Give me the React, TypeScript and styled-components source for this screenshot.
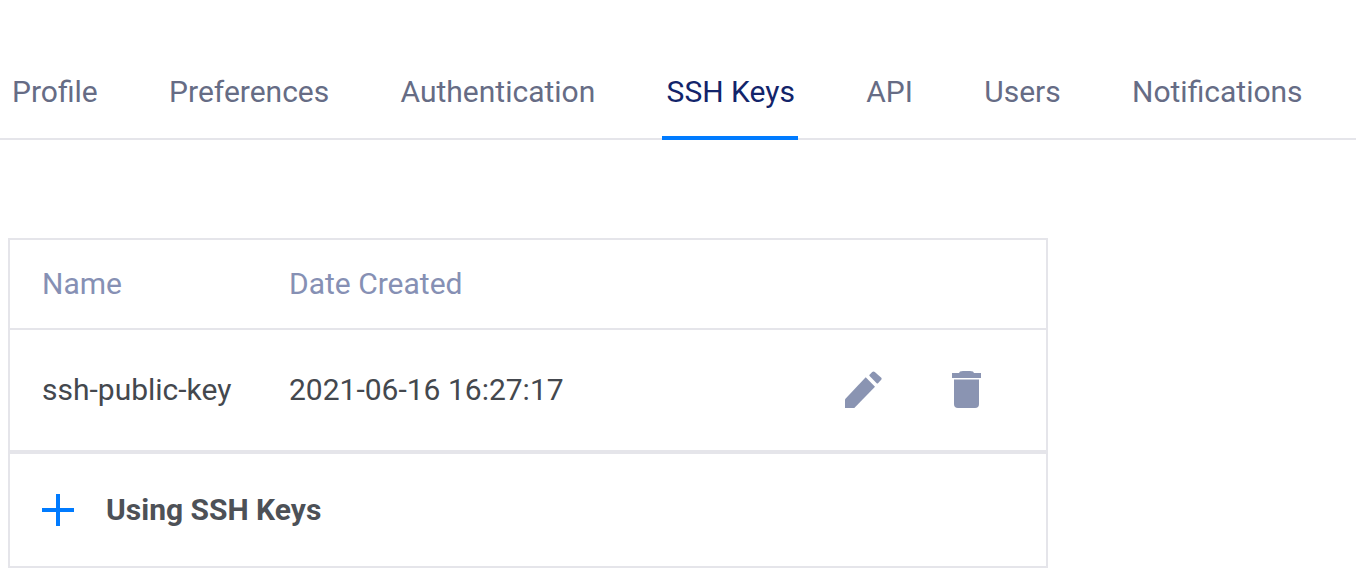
import React from "react";
import styled, { createGlobalStyle } from "styled-components";

const Global = createGlobalStyle`
  html, body { margin: 0; padding: 0; background: #fff; overflow: hidden; }
  body { font-family: Roboto, "Liberation Sans", sans-serif; }
`;
const Page = styled.div`
  width: 1356px; height: 588px; display: flex; flex-direction: column; overflow: hidden;
`;
const Tabs = styled.nav`
  display: flex; height: 140px; box-sizing: border-box; padding: 68px 0 0 7px; gap: 63.33px;
  border-bottom: 2px solid #e5e5ea; flex: none;
`;
const Tab = styled.div<{ $active?: boolean }>`
  height: 72px; box-sizing: border-box; padding: 6px 3px 0 5px; font-size: 30px; line-height: 36px;
  color: ${p => (p.$active ? "#12246a" : "#666c85")};
  border-bottom: 4px solid ${p => (p.$active ? "#007bff" : "transparent")};
  white-space: nowrap;
`;
const Card = styled.section`
  margin: 98px 0 0 8px; width: 1040px; box-sizing: border-box; border: 2px solid #e5e5ea; flex: none;
`;
const Row = styled.div`
  display: grid; grid-template-columns: 247px 1fr auto; align-items: center; padding: 0 32px 2px;
`;
const HeadRow = styled(Row)`
  height: 88px; box-sizing: content-box; padding-top: 0; padding-bottom: 0; line-height: 86px;
  border-bottom: 2px solid #e5e5ea; color: #8690b4; font-size: 30px;
`;
const BodyRow = styled(Row)`
  height: 120px; box-sizing: border-box; font-size: 30px; color: #44484e;
`;
const Divider = styled.hr`
  margin: 0; border: 0; height: 4px; background: #e5e5ea;
`;
const Actions = styled.div`
  display: flex; gap: 70px; align-items: center; padding-right: 33px; color: #8a94b2;
`;
const Expander = styled.div`
  height: 112px; box-sizing: border-box; display: flex; align-items: center; padding: 0 0 2px 32px; gap: 32px;
  font-size: 30px; font-weight: 700; color: #4d5157;
`;
const PlusIcon = styled.svg`
  margin-top: 2px; flex: none;
`;

export default function App() {
  return (
    <Page>
      <Global />
      <Tabs>
        <Tab>Profile</Tab>
        <Tab>Preferences</Tab>
        <Tab>Authentication</Tab>
        <Tab $active>SSH Keys</Tab>
        <Tab>API</Tab>
        <Tab>Users</Tab>
        <Tab>Notifications</Tab>
      </Tabs>
      <Card>
        <HeadRow><span>Name</span><span>Date Created</span><span /></HeadRow>
        <BodyRow>
          <span>ssh-public-key</span>
          <span>2021-06-16 16:27:17</span>
          <Actions>
            <svg width="37" height="37" viewBox="0 0 37 37" fill="currentColor">
              <path d="M0 37V28.3L20.7 6.3 30 15.7 9.3 37z" />
              <path d="M24.6 3.7l2.6-2.7a2.4 2.4 0 0 1 2.6-.1l6.2 5.5a1.8 1.8 0 0 1 .2 2.4l-3.2 3.5a1 1 0 0 1-1.3 0L24.6 5a1 1 0 0 1 0-1.3z" />
            </svg>
            <svg width="29" height="37" viewBox="0 0 29 37" fill="currentColor">
              <path d="M8 0.6C9 0.2 10 0 11 0h7c1 0 2 .2 3 .6L22 2h7v5H0V2h7z" />
              <path d="M2 8.5h25V33a4 4 0 0 1-4 4H6a4 4 0 0 1-4-4z" />
            </svg>
          </Actions>
        </BodyRow>
        <Divider />
        <Expander>
          <PlusIcon width="32" height="32" viewBox="0 0 32 32"><path d="M16 0v32M0 16h32" stroke="#007bff" strokeWidth="4" fill="none"/></PlusIcon>
          Using SSH Keys
        </Expander>
      </Card>
    </Page>
  );
}
